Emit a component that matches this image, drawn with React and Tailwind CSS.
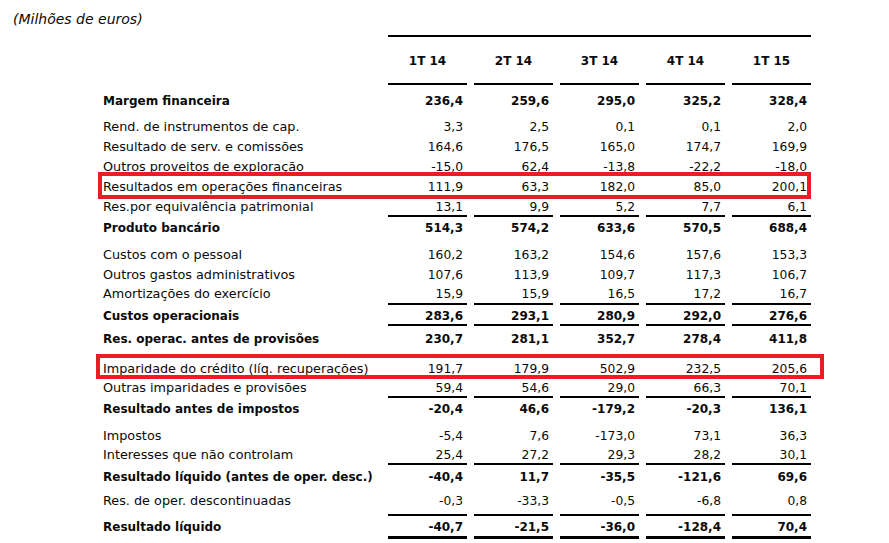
import React from "react";

const rows = [
  { t: "row", label: "Margem financeira", v: ["236,4", "259,6", "295,0", "325,2", "328,4"], b: true, h: "h-[20px]", mt: "mt-[5px]" },
  { t: "row", label: "Rend. de instrumentos de cap.", v: ["3,3", "2,5", "0,1", "0,1", "2,0"], h: "h-[20px]", mt: "mt-[6px]" },
  { t: "row", label: "Resultado de serv. e comissões", v: ["164,6", "176,5", "165,0", "174,7", "169,9"], h: "h-[20px]" },
  { t: "row", label: "Outros proveitos de exploração", v: ["-15,0", "62,4", "-13,8", "-22,2", "-18,0"], h: "h-[20px]" },
  { t: "row", label: "Resultados em operações financeiras", v: ["111,9", "63,3", "182,0", "85,0", "200,1"], h: "h-[21px]" },
  { t: "row", label: "Res.por equivalência patrimonial", v: ["13,1", "9,9", "5,2", "7,7", "6,1"], h: "h-[18px]" },
  { t: "line" },
  { t: "row", label: "Produto bancário", v: ["514,3", "574,2", "633,6", "570,5", "688,4"], b: true, h: "h-[20px]" },
  { t: "row", label: "Custos com o pessoal", v: ["160,2", "163,2", "154,6", "157,6", "153,3"], h: "h-[20px]", mt: "mt-[7px]" },
  { t: "row", label: "Outros gastos administrativos", v: ["107,6", "113,9", "109,7", "117,3", "106,7"], h: "h-[20px]" },
  { t: "row", label: "Amortizações do exercício", v: ["15,9", "15,9", "16,5", "17,2", "16,7"], h: "h-[19px]" },
  { t: "line" },
  { t: "row", label: "Custos operacionais", v: ["283,6", "293,1", "280,9", "292,0", "276,6"], b: true, h: "h-[19px]" },
  { t: "line" },
  { t: "row", label: "Res. operac. antes de provisões", v: ["230,7", "281,1", "352,7", "278,4", "411,8"], b: true, h: "h-[24px]" },
  { t: "row", label: "Imparidade do crédito (líq. recuperações)", v: ["191,7", "179,9", "502,9", "232,5", "205,6"], h: "h-[20px]", mt: "mt-[8px]" },
  { t: "row", label: "Outras imparidades e provisões", v: ["59,4", "54,6", "29,0", "66,3", "70,1"], h: "h-[18px]" },
  { t: "line" },
  { t: "row", label: "Resultado antes de impostos", v: ["-20,4", "46,6", "-179,2", "-20,3", "136,1"], b: true, h: "h-[20px]" },
  { t: "row", label: "Impostos", v: ["-5,4", "7,6", "-173,0", "73,1", "36,3"], h: "h-[20px]", mt: "mt-[7px]" },
  { t: "row", label: "Interesses que não controlam", v: ["25,4", "27,2", "29,3", "28,2", "30,1"], h: "h-[18px]" },
  { t: "line" },
  { t: "row", label: "Resultado líquido (antes de oper. desc.)", v: ["-40,4", "11,7", "-35,5", "-121,6", "69,6"], b: true, h: "h-[22px]" },
  { t: "row", label: "Res. de oper. descontinuadas", v: ["-0,3", "-33,3", "-0,5", "-6,8", "0,8"], h: "h-[27px]" },
  { t: "line" },
  { t: "row", label: "Resultado líquido", v: ["-40,7", "-21,5", "-36,0", "-128,4", "70,4"], b: true, h: "h-[20px]" },
  { t: "thick" },
];

const grid = "grid grid-cols-[278px_repeat(5,79px)] gap-x-[7px]";

function Line({ thick }) {
  return (
    <div className={grid + (thick ? " h-[3px]" : " h-[2px]")}>
      <div />
      {[0, 1, 2, 3, 4].map((i) => (
        <div key={i} className="bg-black" />
      ))}
    </div>
  );
}

function Row({ r }) {
  return (
    <div className={`${grid} ${r.h} ${r.mt || ""} items-center`}>
      <div
        className={
          "pt-[2px] whitespace-nowrap " +
          (r.b ? "text-[12px] font-bold" : "text-[12.8px]")
        }
      >
        {r.label}
      </div>
      {r.v.map((x, i) => (
        <div
          key={i}
          className={
            "pt-[2px] text-right pr-[4px] whitespace-nowrap " +
            (r.b ? "text-[12px] font-bold" : "text-[12.3px]")
          }
        >
          {x}
        </div>
      ))}
    </div>
  );
}

export default function App() {
  return (
    <div
      className="relative w-[889px] h-[543px] overflow-hidden bg-white text-[#0a0a0a] leading-none"
      style={{ fontFamily: '"DejaVu Sans", Verdana, sans-serif' }}
    >
      <div className="h-[35px] pl-[13px] pt-[9px]">
        <span className="italic text-[14px] leading-[20px]">(Milhões de euros)</span>
      </div>
      <div className="pl-[103px]">
        <div className="grid grid-cols-[285px_423px] h-[2px]">
          <div />
          <div className="bg-black" />
        </div>
        <div className={`${grid} h-[46px] items-center`}>
          <div />
          {["1T 14", "2T 14", "3T 14", "4T 14", "1T 15"].map((h) => (
            <div key={h} className="pt-[2px] text-center text-[12px] font-bold">
              {h}
            </div>
          ))}
        </div>
        <Line />
        {rows.map((r, i) =>
          r.t === "row" ? (
            <Row key={i} r={r} />
          ) : (
            <Line key={i} thick={r.t === "thick"} />
          )
        )}
      </div>
      <div className="absolute left-[98px] top-[172px] w-[713px] h-[27px] border-4 border-[#ec1c24]" />
      <div className="absolute left-[96px] top-[354px] w-[728px] h-[25px] border-4 border-[#ec1c24]" />
    </div>
  );
}
